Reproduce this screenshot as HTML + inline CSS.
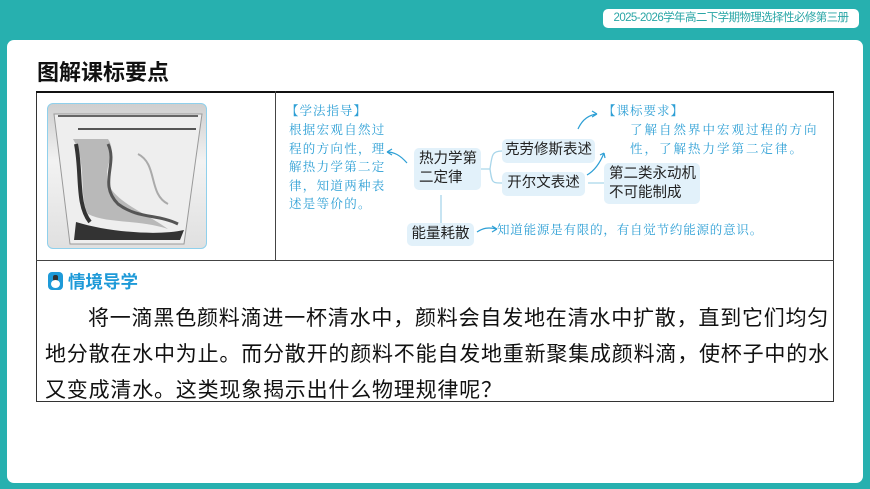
<!DOCTYPE html>
<html><head><meta charset="utf-8"><style>
*{margin:0;padding:0;box-sizing:border-box}
body{width:870px;height:489px;background:#27b0af;position:relative;overflow:hidden;font-family:"Liberation Sans","Noto Sans CJK SC",sans-serif}
.abs{position:absolute}
.panel{left:7px;top:40px;width:856px;height:443px;background:#fff;border-radius:7px}
.pill{left:603px;top:9px;width:256px;height:19px;background:#fff;border-radius:5px;color:#2aa6a6;font-size:11.5px;line-height:19px;text-align:center;letter-spacing:-0.6px}
.title{left:37px;top:55px;font-size:22px;font-weight:bold;color:#111}
.hw{color:#2d9fd5;font-size:12.5px;line-height:19px;font-family:"Noto Serif CJK SC","Liberation Serif",serif;white-space:nowrap}
.box{background:#e2f1fa;border-radius:5px;font-size:14.5px;color:#222;line-height:19px;white-space:nowrap;text-align:center}
.para{left:45px;width:790px;font-size:21px;line-height:36px;color:#111;letter-spacing:0.8px}
</style></head><body>
<div class="abs panel"></div>
<div class="abs pill">2025-2026学年高二下学期物理选择性必修第三册</div>
<div class="abs title">图解课标要点</div>
<div class="abs" style="left:36px;top:91px;width:798px;height:311px;border:1px solid #333"></div>
<div class="abs" style="left:36px;top:91px;width:798px;height:2px;background:#111"></div>
<div class="abs" style="left:275px;top:91px;width:1px;height:169px;background:#444"></div>
<div class="abs" style="left:36px;top:260px;width:798px;height:1px;background:#444"></div>
<!-- glass image -->
<div class="abs" style="left:47px;top:103px;width:160px;height:146px;border:1.5px solid #8fd0ec;border-radius:6px;overflow:hidden;background:linear-gradient(#cfcfcf,#f2f2f2 40%,#e0e0e0)">
<svg width="160" height="146" viewBox="0 0 160 146">
<path d="M6 10 L154 10 L136 140 L22 140 Z" fill="#eeeeee" stroke="#999" stroke-width="1"/>
<path d="M10 12 L150 12" stroke="#666" stroke-width="2"/>
<path d="M30 25 L148 25" stroke="#222" stroke-width="1.5"/>
<path d="M25 35 C40 60 30 90 40 110 C60 120 90 115 120 125 C100 110 70 100 60 80 C55 60 70 50 60 35" fill="#777" opacity=".45"/>
<path d="M28 40 C34 70 28 100 42 118" stroke="#333" stroke-width="4" fill="none"/>
<path d="M60 40 C70 60 50 80 70 100 C90 115 110 110 130 120" stroke="#555" stroke-width="3" fill="none"/>
<path d="M28 118 C60 128 110 132 136 126 L132 136 L26 136 Z" fill="#333"/>
<path d="M90 50 C110 60 100 90 120 100" stroke="#aaa" stroke-width="2" fill="none"/>
</svg></div>
<!-- mind map -->
<div class="abs hw" style="left:286px;top:101px;letter-spacing:1px">【学法指导】</div>
<div class="abs hw" style="left:289px;top:120px;letter-spacing:1.3px;line-height:18.5px">根据宏观自然过<br>程的方向性，理<br>解热力学第二定<br>律，知道两种表<br>述是等价的。</div>
<div class="abs hw" style="left:603px;top:101px;letter-spacing:1px">【课标要求】</div>
<div class="abs hw" style="left:630px;top:120px;letter-spacing:2px">了解自然界中宏观过程的方向</div>
<div class="abs hw" style="left:630px;top:139px;letter-spacing:2px">性，了解热力学第二定律。</div>
<div class="abs hw" style="left:497px;top:220px;letter-spacing:0.8px">知道能源是有限的，有自觉节约能源的意识。</div>
<svg class="abs" style="left:270px;top:95px" width="560" height="160" viewBox="0 0 560 160">
<g fill="none" stroke="#a9d6ea" stroke-width="1.3">
<path d="M204 74 H220 M220 74 C222 60 222 56 232 56 M220 74 C222 88 222 88 232 88"/>
<path d="M318 88 H335"/>
<path d="M171 100 V128"/>
</g>
<g fill="none" stroke="#2d9fd5" stroke-width="1.2">
<path d="M137 68 C130 60 124 57 117 57 M117 57 l5 -3 M117 57 l5 3"/>
<path d="M308 34 C312 25 318 20 327 19 M327 19 l-5 -3 M327 19 l-5 3"/>
<path d="M317 80 C324 76 330 68 334 58 M334 58 l-4 2 M334 58 l1 5"/>
<path d="M207 137 C213 133 218 132 227 134 M227 134 l-5 -3 M227 134 l-5 3"/>
</g>
</svg>
<div class="abs box" style="left:414px;top:148px;width:67px;height:42px;padding-top:2px;text-align:left;padding-left:5px">热力学第<br>二定律</div>
<div class="abs box" style="left:502px;top:139px;width:93px;height:24px;padding-top:2px">克劳修斯表述</div>
<div class="abs box" style="left:502px;top:172px;width:83px;height:24px;padding-top:2px">开尔文表述</div>
<div class="abs box" style="left:604px;top:163px;width:96px;height:41px;padding-top:2px;text-align:left;padding-left:5px">第二类永动机<br>不可能制成</div>
<div class="abs box" style="left:407px;top:223px;width:67px;height:23px;padding-top:2px">能量耗散</div>
<!-- bottom -->
<div class="abs" style="left:48px;top:272px;width:15px;height:18px;background:#1e9ad8;border-radius:4px">
<div class="abs" style="left:5px;top:3px;width:5px;height:6px;background:#333;border-radius:2px"></div>
<div class="abs" style="left:3px;top:8px;width:9px;height:8px;background:#fff;border-radius:50%"></div>
</div>
<div class="abs" style="left:68px;top:269px;font-size:17.5px;color:#1e9ad8;font-weight:bold">情境导学</div>
<div class="abs para" style="top:301px;text-indent:43px">将一滴黑色颜料滴进一杯清水中，颜料会自发地在清水中扩散，直到它们均匀地分散在水中为止。而分散开的颜料不能自发地重新聚集成颜料滴，使杯子中的水又变成清水。这类现象揭示出什么物理规律呢？</div>
</body></html>
